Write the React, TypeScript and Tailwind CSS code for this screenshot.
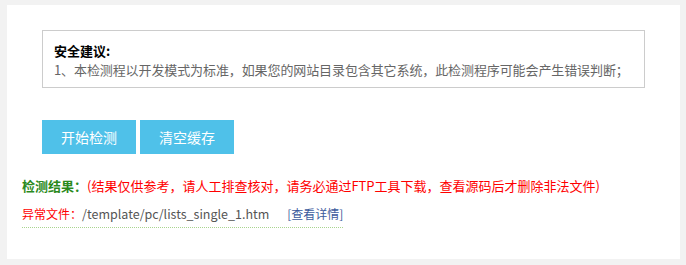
export default function App() {
  return (
    <div
      className="min-h-[265px] bg-[#f2f2f2] pl-[7px] pr-[6px] pt-[5px] pb-[6px]"
      style={{ fontFamily: '"Noto Sans CJK SC", "Noto Sans", sans-serif' }}
    >
      <div className="h-[254px] bg-white px-[15px] pt-[25px]">
        {/* advice box */}
        <div className="mx-[20px] border border-[#cccccc] px-[11px] pt-[10px] pb-[8px] text-[13px] leading-[19px]">
          <p className="font-bold text-[#000]">安全建议:</p>
          <p className="whitespace-nowrap tracking-[-0.1px] text-[#666]">
            1、本检测程以开发模式为标准，如果您的网站目录包含其它系统，此检测程序可能会产生错误判断；
          </p>
        </div>

        {/* actions */}
        <div className="mt-[32px] ml-[20px] flex gap-[4px]">
          <button className="h-[34px] w-[94px] bg-[#4fc1e9] text-[14px] text-white">开始检测</button>
          <button className="h-[34px] w-[94px] bg-[#4fc1e9] text-[14px] text-white">清空缓存</button>
        </div>

        {/* result */}
        <p className="mt-[22px] whitespace-nowrap text-[13px] leading-[20px]">
          <span className="font-bold text-[#2b8a1c]">检测结果：</span>
          <span className="text-[#ff0000]">(结果仅供参考，请人工排查核对，请务必通过FTP工具下载，查看源码后才删除非法文件)</span>
        </p>

        <div className="mt-[8px] inline-flex items-center whitespace-nowrap border-b border-dotted border-[#a9d48f] pb-[3px] text-[12px] leading-[20px]">
          <span className="text-[#ff0000]">异常文件：</span>
          <span className="text-[12.5px] text-[#555]">/template/pc/lists_single_1.htm</span>
          <a href="#" className="ml-[18px] text-[#3b5a9c]">[查看详情]</a>
        </div>
      </div>
    </div>
  )
}
